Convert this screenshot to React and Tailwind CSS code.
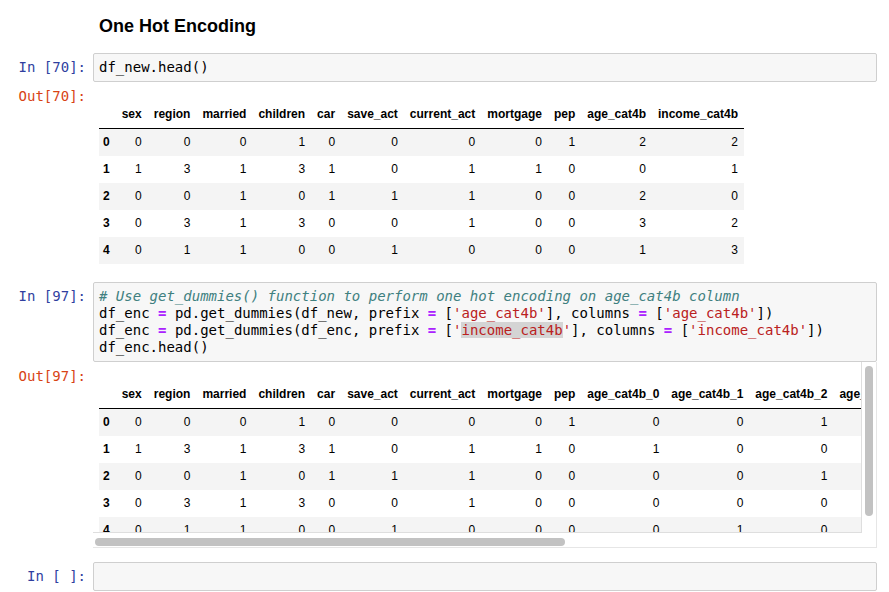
const MONO = "font-['DejaVu_Sans_Mono',Menlo,monospace]";

const cols1 = ["sex", "region", "married", "children", "car", "save_act", "current_act", "mortgage", "pep", "age_cat4b", "income_cat4b"];
const rows1 = [
  [0, 0, 0, 1, 0, 0, 0, 0, 1, 2, 2],
  [1, 3, 1, 3, 1, 0, 1, 1, 0, 0, 1],
  [0, 0, 1, 0, 1, 1, 1, 0, 0, 2, 0],
  [0, 3, 1, 3, 0, 0, 1, 0, 0, 3, 2],
  [0, 1, 1, 0, 0, 1, 0, 0, 0, 1, 3],
];

// only the columns that show before the scroll view cuts off
const base = ["sex", "region", "married", "children", "car", "save_act", "current_act", "mortgage", "pep"];
const dummies = (n) => [0, 1, 2, 3].map((k) => (k === n ? 1 : 0));
const cols2 = [...base, "age_cat4b_0", "age_cat4b_1", "age_cat4b_2", "age_cat4b_3"];
const rows2 = rows1.map((r) => [...r.slice(0, 9), ...dummies(r[9])]);

function Prompt({ children, out }) {
  return (
    <div
      className={`w-[93px] shrink-0 pt-[6px] pr-[7px] text-right text-[14px] leading-[17px] whitespace-pre ${MONO} ${
        out ? "text-[#D84315]" : "text-[#303F9F]"
      }`}
    >
      {children}
    </div>
  );
}

function DataFrame({ cols, rows }) {
  return (
    <table className="w-max whitespace-nowrap text-[12px] leading-[15px] text-black">
      <thead>
        <tr>
          <th className="border-b border-black pl-[4px] pr-[6px] py-[6px]" />
          {cols.map((c) => (
            <th key={c} className="border-b border-black px-[6px] py-[6px] text-right font-bold">
              {c}
            </th>
          ))}
        </tr>
      </thead>
      <tbody>
        {rows.map((r, i) => (
          <tr key={i} className="odd:bg-[#f4f4f4]">
            <th className="pl-[4px] pr-[6px] py-[6px] text-left font-bold">{i}</th>
            {r.map((v, j) => (
              <td key={j} className="px-[6px] py-[6px] text-right">
                {v}
              </td>
            ))}
          </tr>
        ))}
      </tbody>
    </table>
  );
}

const Op = () => <span className="font-bold text-[#AA22FF]">=</span>;
const Str = ({ children }) => <span className="text-[#BA2121]">{children}</span>;

export default function App() {
  return (
    <div className="w-[889px] h-[592px] overflow-hidden bg-white font-['Liberation_Sans',Arial,sans-serif] text-black">
      {/* markdown heading */}
      <div className="h-[53px] pt-[15px] pl-[99px]">
        <h3 className="text-[18px] leading-[22px] font-bold">One Hot Encoding</h3>
      </div>

      {/* In [70] */}
      <div className="flex">
        <Prompt>In [70]:</Prompt>
        <div className={`w-[784px] rounded-[2px] border border-[#cfcfcf] bg-[#f7f7f7] px-[5px] py-[5px] text-[14px] leading-[17px] whitespace-pre ${MONO}`}>
          df_new.head()
        </div>
      </div>
      <div className="flex">
        <Prompt out>Out[70]:</Prompt>
        <div className="pt-[19px] pb-[18px] pl-[6px]">
          <DataFrame cols={cols1} rows={rows1} />
        </div>
      </div>

      {/* In [97] */}
      <div className="flex">
        <Prompt>In [97]:</Prompt>
        <div className={`w-[784px] rounded-[2px] border border-[#cfcfcf] bg-[#f7f7f7] px-[5px] py-[5px] text-[14px] leading-[17px] whitespace-pre ${MONO}`}>
          <div className="italic text-[#408080]"># Use get_dummies() function to perform one hot encoding on age_cat4b column</div>
          <div>
            df_enc <Op /> pd.get_dummies(df_new, prefix <Op /> [<Str>'age_cat4b'</Str>], columns <Op /> [<Str>'age_cat4b'</Str>])
          </div>
          <div>
            df_enc <Op /> pd.get_dummies(df_enc, prefix <Op /> [
            <Str>
              '<span className="bg-[#d4d4d4]">income_cat4b</span>'
            </Str>
            ], columns <Op /> [<Str>'income_cat4b'</Str>])
          </div>
          <div>df_enc.head()</div>
        </div>
      </div>
      <div className="flex">
        <Prompt out>Out[97]:</Prompt>
        <div className="relative h-[186px] w-[784px] border-r border-b border-[#e6e6e6]">
          <div className="h-[171px] w-[769px] overflow-hidden border-r border-b border-[#dedede] pt-[19px] pl-[6px]">
            <DataFrame cols={cols2} rows={rows2} />
          </div>
          <div className="mt-[5px] ml-[2px] h-[8px] w-[470px] rounded-full bg-[#c2c2c2]" />
          <div className="absolute right-[3px] top-[4px] h-[150px] w-[8px] rounded-full bg-[#c2c2c2]" />
        </div>
      </div>

      {/* In [ ] */}
      <div className="flex pt-[14px]">
        <Prompt>In [ ]:</Prompt>
        <div className={`h-[29px] w-[784px] rounded-[2px] border border-[#cfcfcf] bg-[#f7f7f7] ${MONO}`} />
      </div>
    </div>
  );
}
